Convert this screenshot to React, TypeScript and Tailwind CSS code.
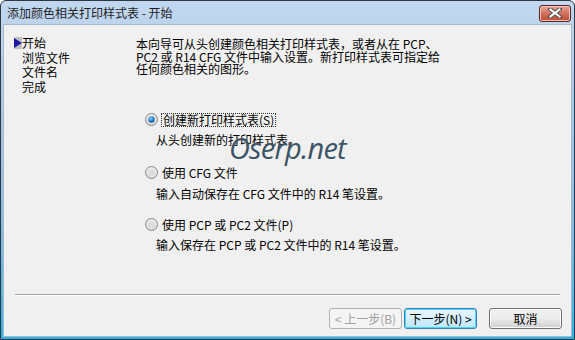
import React from "react";

const cjk = { fontFamily: '"Noto Sans CJK SC", "Noto Sans", sans-serif' };

function Radio({ checked }: { checked?: boolean }) {
  return (
    <svg width="13" height="13" viewBox="0 0 13 13" className="shrink-0">
      <defs>
        <radialGradient id={checked ? "rc" : "ru"} cx="50%" cy="40%" r="60%">
          <stop offset="0%" stopColor="#ffffff" />
          <stop offset="100%" stopColor="#d4d4d4" />
        </radialGradient>
        <radialGradient id="dot" cx="40%" cy="35%" r="70%">
          <stop offset="0%" stopColor="#8fd6ff" />
          <stop offset="60%" stopColor="#1f7ac8" />
          <stop offset="100%" stopColor="#0d4f92" />
        </radialGradient>
      </defs>
      <circle cx="6.5" cy="6.5" r="6" fill={`url(#${checked ? "rc" : "ru"})`} stroke="#8a8a8a" strokeWidth="1" />
      {checked ? <circle cx="6.5" cy="6.5" r="3.2" fill="url(#dot)" /> : <circle cx="6.5" cy="6.5" r="3.5" fill="#dcdcdc" />}
    </svg>
  );
}

function Btn({ children, variant }: { children: React.ReactNode; variant?: "disabled" | "focus" }) {
  const base = "w-[73px] h-[21px] rounded-[3px] text-[12px] flex items-center justify-center leading-none";
  if (variant === "disabled")
    return (
      <div className={`${base} border border-[#adb2b5] bg-[#f4f4f4] text-[#a0a0a0]`} style={cjk}>
        {children}
      </div>
    );
  if (variant === "focus")
    return (
      <div className={`${base} border border-[#3c7fb1] bg-gradient-to-b from-[#eaf6fd] to-[#bee6fd] text-black shadow-[inset_0_0_0_1px_#48d6fd]`} style={cjk}>
        {children}
      </div>
    );
  return (
    <div className={`${base} border border-[#707070] bg-gradient-to-b from-[#f2f2f2] via-[#ebebeb] to-[#cfcfcf] text-black shadow-[inset_0_0_0_1px_#fcfcfc]`} style={cjk}>
      {children}
    </div>
  );
}

export default function App() {
  return (
    <div className="w-[575px] h-[340px] relative">
      <div className="w-full h-full flex flex-col border border-[#2e3845] rounded-t-[6px] overflow-hidden bg-gradient-to-b from-[#c2d7ef] via-[#9dc1e5] to-[#28b3e3]">
        {/* Title bar */}
        <div className="h-[23px] flex items-center justify-between pl-[6px] pr-[3px] shrink-0">
          <span className="text-[12px] text-[#1e1e1e] leading-none mt-[1px]" style={cjk}>
            添加颜色相关打印样式表 - 开始
          </span>
          <div className="w-[32px] h-[17px] mt-[1px] rounded-[3px] border border-[#5b2020] bg-gradient-to-b from-[#e8a99a] via-[#d0705c] to-[#c04830] flex items-center justify-center shadow-[inset_0_0_0_1px_#eec3b8]">
            <svg width="14" height="10" viewBox="0 0 14 10">
              <path d="M2 1 L12 9 M12 1 L2 9" stroke="#4a4a4a" strokeWidth="4" strokeLinecap="square" />
              <path d="M2.5 1.5 L11.5 8.5 M11.5 1.5 L2.5 8.5" stroke="#ffffff" strokeWidth="2.2" strokeLinecap="square" />
            </svg>
          </div>
        </div>
        {/* Client */}
        <div className="flex-1 mx-[2px] mb-[2px] bg-[#f0f0f0] border border-[#a8b8cc] flex flex-col">
          <div className="flex-1 flex">
            {/* Nav */}
            <div className="w-[132px] shrink-0 pl-[10px] pt-[11px] text-[12px] leading-[14.5px] text-black" style={cjk}>
              <div className="flex items-center">
                <span className="w-[8px] h-[12px] bg-[#c0c0c0] flex items-center justify-center">
                  <svg width="8" height="10" viewBox="0 0 8 10">
                    <path d="M0 0 L8 5 L0 10 Z" fill="#1a1aa0" />
                  </svg>
                </span>
                <span>开始</span>
              </div>
              <div className="pl-[8px]">浏览文件</div>
              <div className="pl-[8px]">文件名</div>
              <div className="pl-[8px]">完成</div>
            </div>
            {/* Main */}
            <div className="flex-1 pt-[13px] text-[12px] text-black" style={cjk}>
              <div className="leading-[12.5px]">
                <div>本向导可从头创建颜色相关打印样式表，或者从在 PCP、</div>
                <div>PC2 或 R14 CFG 文件中输入设置。新打印样式表可指定给</div>
                <div>任何颜色相关的图形。</div>
              </div>
              <div className="mt-[37px] pl-[9px]">
                <div className="flex items-center gap-[3px] h-[14px]">
                  <Radio checked />
                  <span className="border border-dotted border-[#333] px-[1px] leading-[12px]">创建新打印样式表(S)</span>
                </div>
                <div className="pl-[11px] mt-[6px] leading-[14px]">从头创建新的打印样式表。</div>
                <div className="flex items-center gap-[4px] h-[14px] mt-[19px]">
                  <Radio />
                  <span className="leading-[12px]">使用 CFG 文件</span>
                </div>
                <div className="pl-[11px] mt-[7px] leading-[14px]">输入自动保存在 CFG 文件中的 R14 笔设置。</div>
                <div className="flex items-center gap-[4px] h-[14px] mt-[17px]">
                  <Radio />
                  <span className="leading-[12px]">使用 PCP 或 PC2 文件(P)</span>
                </div>
                <div className="pl-[11px] mt-[6px] leading-[14px]">输入保存在 PCP 或 PC2 文件中的 R14 笔设置。</div>
              </div>
            </div>
          </div>
          {/* Separator + buttons */}
          <div className="mx-[11px] h-[2px] border-t border-[#a0a0a0] border-b border-b-[#ffffff]" />
          <div className="h-[40px] flex items-start justify-end pt-[12px] pr-[9px]">
            <Btn variant="disabled">&lt; 上一步(B)</Btn>
            <div className="w-[2px]" />
            <Btn variant="focus">下一步(N) &gt;</Btn>
            <div className="w-[12px]" />
            <Btn>取消</Btn>
          </div>
        </div>
      </div>
      {/* Watermark */}
      <div
        className="absolute left-[229px] top-[133px] text-[29px] italic font-medium text-[#3b5466] leading-none tracking-[-0.8px]"
        style={{ fontFamily: '"Open Sans", "DejaVu Sans", sans-serif' }}
      >
        Oserp.net
      </div>
    </div>
  );
}
